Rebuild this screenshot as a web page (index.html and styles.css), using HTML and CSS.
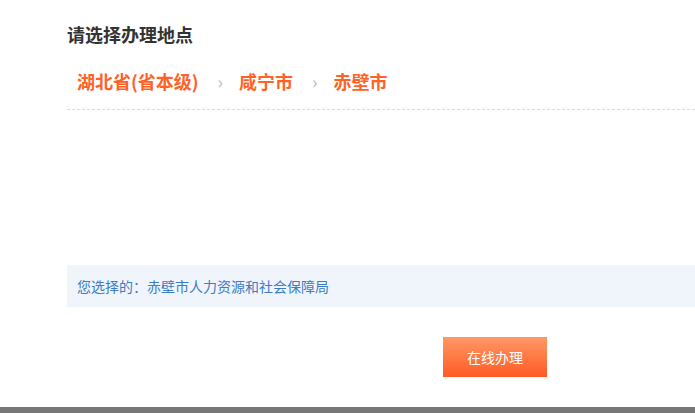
FILE: index.html
```html
<!DOCTYPE html>
<html lang="zh-CN">
<head>
    <meta charset="UTF-8">
    <meta name="viewport" content="width=device-width, initial-scale=1.0">
    <title>选择办理地点</title>
    <link rel="stylesheet" href="styles.css">
</head>
<body>
    <main class="wrap">
        <h2 class="title">请选择办理地点</h2>
        <div class="crumbs">
            <span class="crumb">湖北省(省本级)</span>
            <span class="sep">›</span>
            <span class="crumb">咸宁市</span>
            <span class="sep">›</span>
            <span class="crumb">赤壁市</span>
        </div>
        <div class="blank"></div>
        <div class="chosen">您选择的：赤壁市人力资源和社会保障局</div>
        <div class="actions">
            <button class="btn">在线办理</button>
        </div>
    </main>
    <footer class="foot"></footer>
</body>
</html>
```
FILE: styles.css
```css
body { margin: 0; font-family: "Noto Sans CJK SC", "Liberation Sans", sans-serif; background: #fff; }
.wrap { margin-left: 67px; padding-top: 21px; }
.title { margin: 0; font-size: 18px; font-weight: bold; color: #333; line-height: 26px; }
.crumbs { display: flex; align-items: center; line-height: 26px; padding: 21px 0 15px 10px; border-bottom: 1px dashed #dcdcdc; }
.crumb { font-size: 18px; font-weight: bold; color: #ff6226; }
.sep { color: #bbb; font-size: 18px; margin: 0 16px 0 19px; }
.blank { height: 155px; }
.chosen { background: #f0f4fb; height: 42px; line-height: 42px; padding-left: 10px; font-size: 14px; color: #3b7cc4; }
.actions { display: flex; padding: 30px 0 0 376px; }
.btn { width: 104px; height: 40px; border: 0; color: #fff; font-size: 14px; font-family: inherit; background: linear-gradient(#ff9966, #ff5a24); cursor: pointer; }
.foot { position: fixed; left: 0; right: 0; bottom: 0; height: 6px; background: #777; }
```
